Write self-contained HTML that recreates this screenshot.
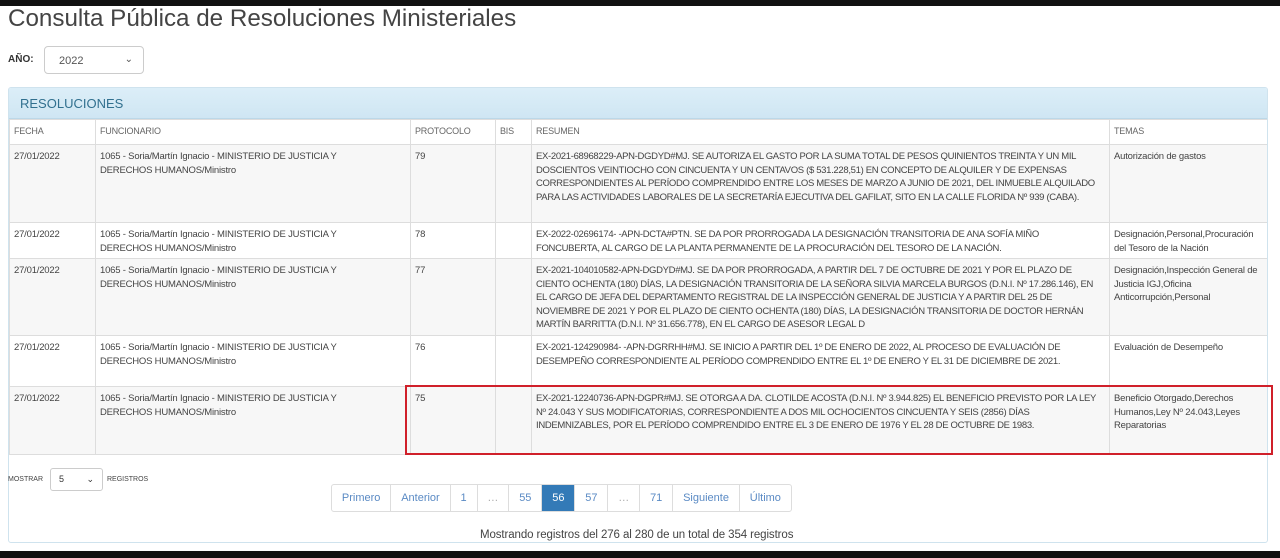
<!DOCTYPE html>
<html><head><meta charset="utf-8"><style>
*{box-sizing:border-box;margin:0;padding:0}
body{width:1280px;height:558px;background:#fff;font-family:"Liberation Sans",Arial,sans-serif;color:#333;position:relative;overflow:hidden}
.top{position:absolute;left:0;top:0;width:1280px;height:6px;background:#111}
.bot{position:absolute;left:0;top:551px;width:1280px;height:7px;background:#111}
h1{position:absolute;left:8px;top:5px;font-weight:normal;font-size:24.2px;color:#444}
.ano{position:absolute;left:8px;top:54px;font-size:10px;font-weight:bold;color:#333}
.sel{position:absolute;left:44px;top:46px;width:100px;height:28px;border:1px solid #ccc;border-radius:4px;font-size:11px;color:#555;padding:8px 14px}
.sel span{position:absolute;right:10px;top:7px;font-size:10px}
.panel{position:absolute;left:8px;top:87px;width:1260px;height:456px;border:1px solid #cfe3ee;border-radius:3px;overflow:hidden}
.ph{height:31px;background:linear-gradient(#dceef8,#cfe6f3);color:#31708f;font-size:13px;padding:8px 11px;border-bottom:1px solid #bcd8e8}
table{border-collapse:collapse;width:100%;table-layout:fixed;font-size:9.5px;color:#444;letter-spacing:-0.2px}
td,th{border:1px solid #ddd;vertical-align:top;padding:5px 4px 3px;line-height:13.5px;text-align:left;font-weight:normal}
th{height:25px;color:#666;padding:5px 4px;font-size:9px}
tr.g td{background:#f7f7f7}
td.f{padding-right:30px}
td.r{padding-right:12px;letter-spacing:-0.32px}
.red{position:absolute;left:405px;top:385px;width:868px;height:70px;border:2px solid #d0202a}
.most{position:absolute;left:8px;top:476px;font-size:7px;color:#444}
.sel2{position:absolute;left:50px;top:468px;width:53px;height:23px;border:1px solid #ccc;border-radius:3px;font-size:9px;padding:5px 8px}
.reg{position:absolute;left:107px;top:476px;font-size:7px;color:#444}
.pag{position:absolute;left:331px;top:484px;display:flex;border:1px solid #ddd;border-radius:3px;height:28px}
.pag div{padding:0 9.9px;line-height:27px;font-size:11px;color:#5a8ac4;border-left:1px solid #ddd}
.pag div:first-child{border-left:none}
.pag .a{background:#337ab7;color:#fff}
.pag .m{color:#aaa}
.info{position:absolute;left:480px;top:529px;font-size:11.5px;color:#444;letter-spacing:-0.1px}
</style></head><body>
<div class="top"></div>
<h1>Consulta Pública de Resoluciones Ministeriales</h1>
<div class="ano">AÑO:</div>
<div class="sel">2022<span>⌄</span></div>
<div class="panel">
<div class="ph">RESOLUCIONES</div>
<table>
<colgroup><col style="width:86px"><col style="width:315px"><col style="width:85px"><col style="width:36px"><col style="width:578px"><col style="width:158px"></colgroup>
<tr><th>FECHA</th><th>FUNCIONARIO</th><th>PROTOCOLO</th><th>BIS</th><th>RESUMEN</th><th>TEMAS</th></tr>
<tr class="g" style="height:78px"><td>27/01/2022</td><td class="f">1065 - Soria/Martín Ignacio - MINISTERIO DE JUSTICIA Y DERECHOS HUMANOS/Ministro</td><td>79</td><td></td><td class="r">EX-2021-68968229-APN-DGDYD#MJ. SE AUTORIZA EL GASTO POR LA SUMA TOTAL DE PESOS QUINIENTOS TREINTA Y UN MIL DOSCIENTOS VEINTIOCHO CON CINCUENTA Y UN CENTAVOS ($ 531.228,51) EN CONCEPTO DE ALQUILER Y DE EXPENSAS CORRESPONDIENTES AL PERÍODO COMPRENDIDO ENTRE LOS MESES DE MARZO A JUNIO DE 2021, DEL INMUEBLE ALQUILADO PARA LAS ACTIVIDADES LABORALES DE LA SECRETARÍA EJECUTIVA DEL GAFILAT, SITO EN LA CALLE FLORIDA Nº 939 (CABA).</td><td>Autorización de gastos</td></tr>
<tr style="height:36px"><td>27/01/2022</td><td class="f">1065 - Soria/Martín Ignacio - MINISTERIO DE JUSTICIA Y DERECHOS HUMANOS/Ministro</td><td>78</td><td></td><td class="r">EX-2022-02696174- -APN-DCTA#PTN. SE DA POR PRORROGADA LA DESIGNACIÓN TRANSITORIA DE ANA SOFÍA MIÑO FONCUBERTA, AL CARGO DE LA PLANTA PERMANENTE DE LA PROCURACIÓN DEL TESORO DE LA NACIÓN.</td><td>Designación,Personal,Procuración del Tesoro de la Nación</td></tr>
<tr class="g" style="height:77px"><td>27/01/2022</td><td class="f">1065 - Soria/Martín Ignacio - MINISTERIO DE JUSTICIA Y DERECHOS HUMANOS/Ministro</td><td>77</td><td></td><td class="r">EX-2021-104010582-APN-DGDYD#MJ. SE DA POR PRORROGADA, A PARTIR DEL 7 DE OCTUBRE DE 2021 Y POR EL PLAZO DE CIENTO OCHENTA (180) DÍAS, LA DESIGNACIÓN TRANSITORIA DE LA SEÑORA SILVIA MARCELA BURGOS (D.N.I. Nº 17.286.146), EN EL CARGO DE JEFA DEL DEPARTAMENTO REGISTRAL DE LA INSPECCIÓN GENERAL DE JUSTICIA Y A PARTIR DEL 25 DE NOVIEMBRE DE 2021 Y POR EL PLAZO DE CIENTO OCHENTA (180) DÍAS, LA DESIGNACIÓN TRANSITORIA DE DOCTOR HERNÁN MARTÍN BARRITTA (D.N.I. Nº 31.656.778), EN EL CARGO DE ASESOR LEGAL D</td><td>Designación,Inspección General de Justicia IGJ,Oficina Anticorrupción,Personal</td></tr>
<tr style="height:51px"><td>27/01/2022</td><td class="f">1065 - Soria/Martín Ignacio - MINISTERIO DE JUSTICIA Y DERECHOS HUMANOS/Ministro</td><td>76</td><td></td><td class="r">EX-2021-124290984- -APN-DGRRHH#MJ. SE INICIO A PARTIR DEL 1º DE ENERO DE 2022, AL PROCESO DE EVALUACIÓN DE DESEMPEÑO CORRESPONDIENTE AL PERÍODO COMPRENDIDO ENTRE EL 1º DE ENERO Y EL 31 DE DICIEMBRE DE 2021.</td><td>Evaluación de Desempeño</td></tr>
<tr class="g" style="height:68px"><td>27/01/2022</td><td class="f">1065 - Soria/Martín Ignacio - MINISTERIO DE JUSTICIA Y DERECHOS HUMANOS/Ministro</td><td>75</td><td></td><td class="r">EX-2021-12240736-APN-DGPR#MJ. SE OTORGA A DA. CLOTILDE ACOSTA (D.N.I. Nº 3.944.825) EL BENEFICIO PREVISTO POR LA LEY Nº 24.043 Y SUS MODIFICATORIAS, CORRESPONDIENTE A DOS MIL OCHOCIENTOS CINCUENTA Y SEIS (2856) DÍAS INDEMNIZABLES, POR EL PERÍODO COMPRENDIDO ENTRE EL 3 DE ENERO DE 1976 Y EL 28 DE OCTUBRE DE 1983.</td><td>Beneficio Otorgado,Derechos Humanos,Ley Nº 24.043,Leyes Reparatorias</td></tr>
</table>
</div>
<div class="red"></div>
<div class="most">MOSTRAR</div>
<div class="sel2">5 <span style="float:right">⌄</span></div>
<div class="reg">REGISTROS</div>
<div class="pag"><div>Primero</div><div>Anterior</div><div>1</div><div class="m">…</div><div>55</div><div class="a">56</div><div>57</div><div class="m">…</div><div>71</div><div>Siguiente</div><div>Último</div></div>
<div class="info">Mostrando registros del 276 al 280 de un total de 354 registros</div>
<div class="bot"></div>
</body></html>
